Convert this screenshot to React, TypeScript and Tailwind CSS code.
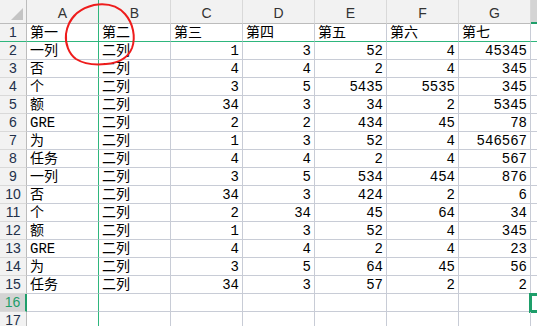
const GRID = "border-[#c8ccd6]";

const colLetters = ["A", "B", "C", "D", "E", "F", "G", "H"];

const rows: string[][] = [
  ["第一", "第二", "第三", "第四", "第五", "第六", "第七"],
  ["一列", "二列", "1", "3", "52", "4", "45345"],
  ["否", "二列", "4", "4", "2", "4", "345"],
  ["个", "二列", "3", "5", "5435", "5535", "345"],
  ["额", "二列", "34", "3", "34", "2", "5345"],
  ["GRE", "二列", "2", "2", "434", "45", "78"],
  ["为", "二列", "1", "3", "52", "4", "546567"],
  ["任务", "二列", "4", "4", "2", "4", "567"],
  ["一列", "二列", "3", "5", "534", "454", "876"],
  ["否", "二列", "34", "3", "424", "2", "6"],
  ["个", "二列", "2", "34", "45", "64", "34"],
  ["额", "二列", "1", "3", "52", "4", "345"],
  ["GRE", "二列", "4", "4", "2", "4", "23"],
  ["为", "二列", "3", "5", "64", "45", "56"],
  ["任务", "二列", "34", "3", "57", "2", "2"],
  [],
  [],
];

const isNum = (v: string) => /^\d+$/.test(v);

function ColHeader({ letter, index }: { letter: string; index: number }) {
  // column H is the selected one and is only a sliver wide on screen
  const selected = letter === "H";
  return (
    <div
      className={`h-6 flex items-center justify-center pt-1 text-[14px] text-[#333] border-r ${
        index === 0 ? "border-r-[#2eb67d]" : "border-r-[#d9d9d9]"
      } ${
        selected
          ? "bg-[#d4d4d4] border-b-2 border-b-[#1e9e6a]"
          : "bg-[#f2f2f2] border-b border-b-[#bcbcbc]"
      }`}
    >
      {selected ? "" : letter}
    </div>
  );
}

function RowHeader({ n }: { n: number }) {
  const selected = n === 16;
  return (
    <div
      className={`h-[18px] flex items-center justify-center text-[14px] border-b ${
        n === 1 ? "border-b-[#2eb67d]" : "border-b-[#d9d9d9]"
      } ${
        selected
          ? "bg-[#d4d4d4] text-[#1e9e6a] border-r-2 border-r-[#1e9e6a]"
          : "bg-[#f2f2f2] text-[#22304a] border-r border-r-[#bcbcbc]"
      }`}
    >
      {n}
    </div>
  );
}

export default function App() {
  return (
    <div className="relative w-[537px] h-[326px] overflow-hidden bg-white [font-family:'Liberation_Sans',sans-serif]">
      <div className="grid grid-cols-[27px_repeat(8,72px)] w-max">
        {/* corner */}
        <div className="h-6 bg-[#f2f2f2] border-r border-b border-[#bcbcbc] flex items-end justify-end pr-[3px] pb-[3px]">
          <svg width="12" height="12" viewBox="0 0 12 12">
            <polygon points="12,0 12,12 0,12" fill="#c4c4c4" />
          </svg>
        </div>
        {colLetters.map((l, i) => (
          <ColHeader key={l} letter={l} index={i} />
        ))}

        {rows.map((r, ri) => {
          const n = ri + 1;
          return [
            <RowHeader key={`h${n}`} n={n} />,
            ...colLetters.map((l, ci) => {
              const v = r[ci] ?? "";
              const green = ci === 0 ? "border-r-[#2eb67d]" : "";
              const greenB = n === 1 ? "border-b-[#2eb67d]" : "";
              const active = n === 16 && l === "H";
              return (
                <div
                  key={`${n}${l}`}
                  className={`relative h-[18px] flex items-center px-[3px] border-r border-b ${GRID} ${green} ${greenB} ${
                    isNum(v) ? "justify-end" : "justify-start"
                  } text-[14px] leading-none text-black whitespace-nowrap [font-family:'Liberation_Mono','Noto_Sans_CJK_SC',monospace]`}
                >
                  {v}
                  {active && (
                    <div className="absolute -left-[2px] -top-px w-[20px] h-[20px] border-[3px] border-[#1e9e6a]" />
                  )}
                </div>
              );
            }),
          ];
        })}
      </div>

      {/* hand-drawn red circle */}
      <svg className="absolute left-0 top-0 pointer-events-none" width="160" height="80" viewBox="0 0 160 80">
        <path
          d="M68 26 C72 15, 82 8, 94 5 C106 3, 117 5, 125 14 C133 23, 136 37, 132 48 C128 58, 118 63, 106 64 C96 65, 84 64, 76 59 C69 54, 65 44, 66 34 C67 26, 71 19, 76 14"
          fill="none"
          stroke="#ee1c1c"
          strokeWidth="2"
          strokeLinecap="round"
        />
      </svg>
    </div>
  );
}
